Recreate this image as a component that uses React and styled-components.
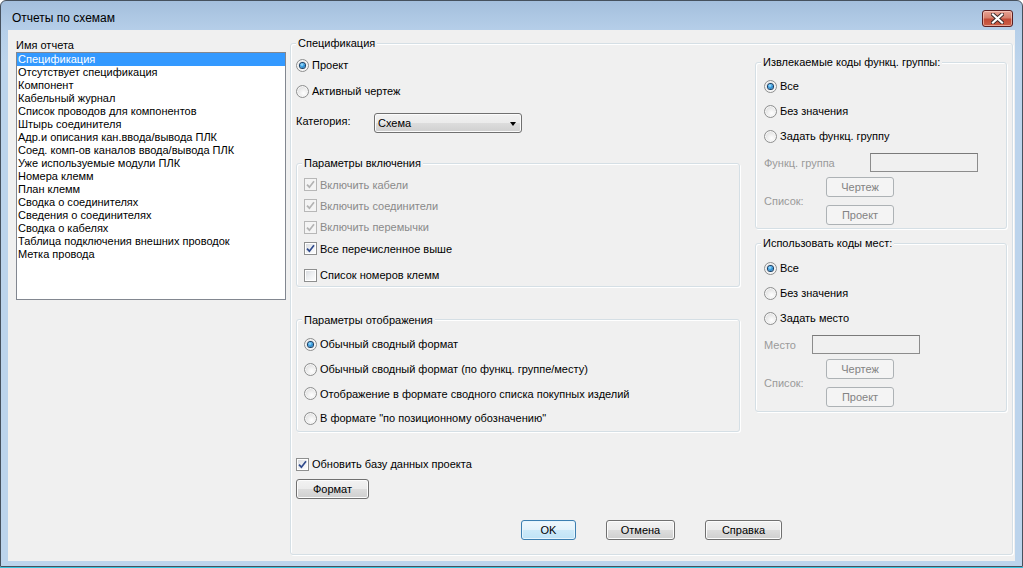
import React from 'react';
import styled, { createGlobalStyle, css } from 'styled-components';

const GlobalStyle = createGlobalStyle`
  html, body { margin: 0; padding: 0; }
  body {
    width: 1023px; height: 568px; overflow: hidden;
    background: linear-gradient(to top, #36c5e0 0, #36c5e0 1px, #ffffff 1px);
    font-family: "Liberation Sans", Arial, sans-serif;
    font-size: 11px; color: #000;
  }
  #root { width: 1023px; height: 568px; }
  * { box-sizing: border-box; }
`;

const Window = styled.div`
  width: 1023px; height: 567px;
  border: 1px solid #46515e;
  border-radius: 6px 6px 0 0;
  background: linear-gradient(#a4bfdd 0, #b6cfe9 30px, #bcd4ec 60px, #bcd4ec 100%);
  display: flex; flex-direction: column;
  padding: 0 7px 5px 7px;
  overflow: hidden;
`;

const TitleBar = styled.div`
  height: 29px; flex: none;
  margin: 0 -7px;
  display: flex; align-items: center;
  padding: 5px 9px 0 11px;
`;

const Title = styled.div`
  font-size: 12px; line-height: 14px; color: #000;
`;

const CloseButton = styled.div`
  margin-left: auto;
  width: 31px; height: 17px;
  border: 1px solid #5a1f22;
  border-radius: 3px;
  background: linear-gradient(#e8a395 0%, #d6806d 45%, #c24a36 55%, #cc6048 100%);
  box-shadow: inset 0 0 0 1px rgba(255, 220, 210, 0.55);
  display: flex; align-items: center; justify-content: center;
`;

const Client = styled.div`
  flex: 1; min-height: 0;
  display: flex; gap: 4px;
  background: #f0f0f0;
  padding: 6px 2px 6px 8px;
`;

const LeftPane = styled.div`
  width: 270px; flex: none;
  display: flex; flex-direction: column;
  padding-top: 2px;
`;

const ListLabel = styled.div`
  line-height: 14px; height: 14px;
`;

const ListBox = styled.div`
  height: 248px;
  border: 1px solid #828790;
  background: #fff;
  padding: 0;
`;

const ListItem = styled.div`
  height: 13px; line-height: 13px;
  padding-left: 1px;
  white-space: nowrap;
  ${p => p.$selected && css`background: #3399ff; color: #fff;`}
`;

const Group = styled.fieldset`
  margin: 0; padding: 0; min-width: 0;
  border: 1px solid #d5dfe5;
  border-radius: 3px;
  box-shadow: inset 1px 1px 0 #fff, 1px 1px 0 #fff;
  margin-top: ${p => p.$mt || 0}px;
`;

const MainGroup = styled(Group)`
  flex: 1;
`;

const Legend = styled.legend`
  margin-left: 5px;
  padding: 0 2px;
  line-height: 14px; height: 14px;
  background: #f0f0f0;
  white-space: nowrap;
`;

const GroupBody = styled.div`
  display: flex; flex-direction: column;
  padding: ${p => p.$pad};
  gap: ${p => p.$gap || 0}px;
`;

const Columns = styled.div`
  display: flex; gap: 15px;
  padding: 0 5px;
`;

const LeftCol = styled.div`
  width: 444px; flex: none;
  display: flex; flex-direction: column;
  padding-top: 5px;
`;

const RightCol = styled.div`
  width: 252px; flex: none;
  display: flex; flex-direction: column;
  padding-top: 5px;
`;

const OptionRow = styled.label`
  display: flex; align-items: center; gap: 3px;
  height: ${p => p.$h || 20}px;
  margin-top: ${p => p.$mt || 0}px;
  color: ${p => (p.$disabled ? '#8a8a8a' : '#000')};
  white-space: nowrap;
  flex: none;
`;

const RadioCircle = styled.span`
  width: 13px; height: 13px; flex: none;
  border-radius: 50%;
  border: 1px solid #8e8f8f;
  background: radial-gradient(circle at 60% 65%, #ffffff 0%, #eeeeee 40%, #d2d2d2 100%);
  box-shadow: inset 0 0 0 1px #f7f7f7;
  display: inline-flex; align-items: center; justify-content: center;
  ${p => p.$checked && css`
    &::after {
      content: '';
      width: 5px; height: 5px; border-radius: 50%;
      background: radial-gradient(circle at 40% 35%, #b7ecff 0%, #3ea3e6 40%, #0d5793 100%);
      box-shadow: 0 0 0 1px #173f66;
    }
  `}
`;

const CheckSquare = styled.span`
  width: 13px; height: 13px; flex: none;
  border: 1px solid ${p => (p.$disabled ? '#b7b7b7' : '#8e8f8f')};
  background: ${p => (p.$disabled
    ? '#f4f4f4'
    : 'linear-gradient(135deg, #d5d8dd 0%, #eef0f2 50%, #ffffff 100%)')};
  box-shadow: inset 0 0 0 1px ${p => (p.$disabled ? '#f4f4f4' : '#ffffff')};
  display: inline-flex; align-items: center; justify-content: center;
`;

const FieldRow = styled.div`
  display: flex; align-items: ${p => p.$align || 'center'};
  margin-top: ${p => p.$mt || 0}px;
  flex: none;
`;

const FieldLabel = styled.span`
  width: ${p => p.$w}px; flex: none;
  line-height: 14px;
  white-space: nowrap;
  color: ${p => (p.$disabled ? '#9a9a9a' : '#000')};
  ${p => p.$top && css`align-self: flex-start; padding-top: 1px;`}
`;

const Select = styled.div`
  width: 148px; height: 20px;
  border: 1px solid #707070;
  border-radius: 3px;
  background: linear-gradient(#f2f2f2 0%, #ebebeb 50%, #dddddd 50%, #cfcfcf 100%);
  box-shadow: inset 0 0 0 1px #fbfbfb;
  display: flex; align-items: center;
  padding: 0 5px 0 3px;
`;

const SelectValue = styled.span`
  flex: 1;
`;

const Arrow = styled.span`
  width: 0; height: 0;
  border-left: 3.5px solid transparent;
  border-right: 3.5px solid transparent;
  border-top: 4px solid #000;
  margin-top: 1px;
`;

const TextBox = styled.div`
  width: 108px; height: 19px;
  border: 1px solid #8c8c8c;
  border-top-color: #7a7a7a;
  background: #f0f0f0;
`;

const Button = styled.button`
  width: ${p => p.$w}px; height: 20px; padding: 0;
  font-family: inherit; font-size: 11px; color: #000;
  border: 1px solid #707070;
  border-radius: 3px;
  background: linear-gradient(#f2f2f2 0%, #ebebeb 50%, #dddddd 50%, #cfcfcf 100%);
  box-shadow: inset 0 0 0 1px #fcfcfc;
  flex: none;
  ${p => p.$default && css`
    border-color: #3c7fb1;
    background: linear-gradient(#f0f8fd 0%, #e2f2fb 50%, #cdeaf9 50%, #bfe3f6 100%);
    box-shadow: inset 0 0 0 1px #e6f5fd;
  `}
  &:disabled {
    color: #838383;
    border-color: #adb2b5;
    background: #f4f4f4;
    box-shadow: none;
  }
`;

const ButtonStack = styled.div`
  display: flex; flex-direction: column; gap: 8px;
`;

const ButtonRow = styled.div`
  display: flex; gap: 30px;
  padding-left: 225px;
  margin-top: ${p => p.$mt || 0}px;
`;

const CloseGlyph = () => (
  <svg width="13" height="11" viewBox="0 0 13 11">
    <path d="M2 1.5 L11 9.5 M11 1.5 L2 9.5" stroke="#3b2a2a" strokeWidth="4" strokeLinecap="square" />
    <path d="M2 1.5 L11 9.5 M11 1.5 L2 9.5" stroke="#ffffff" strokeWidth="2.2" strokeLinecap="square" />
  </svg>
);

const CheckMark = ({ disabled }) => (
  <svg width="9" height="9" viewBox="0 0 9 9">
    <path
      d="M1 4.6 L3.4 7.2 L8 1.2"
      fill="none"
      stroke={disabled ? '#b3b3b3' : '#2f4a8c'}
      strokeWidth="1.7"
    />
  </svg>
);

const Radio = ({ label, checked, mt, h }) => (
  <OptionRow $mt={mt} $h={h}>
    <RadioCircle $checked={checked} />
    <span>{label}</span>
  </OptionRow>
);

const Check = ({ label, checked, disabled, mt, h }) => (
  <OptionRow $mt={mt} $h={h} $disabled={disabled}>
    <CheckSquare $disabled={disabled}>{checked && <CheckMark disabled={disabled} />}</CheckSquare>
    <span>{label}</span>
  </OptionRow>
);

const reports = [
  'Спецификация',
  'Отсутствует спецификация',
  'Компонент',
  'Кабельный журнал',
  'Список проводов для компонентов',
  'Штырь соединителя',
  'Адр.и описания кан.ввода/вывода ПЛК',
  'Соед. комп-ов каналов ввода/вывода ПЛК',
  'Уже используемые модули ПЛК',
  'Номера клемм',
  'План клемм',
  'Сводка о соединителях',
  'Сведения о соединителях',
  'Сводка о кабелях',
  'Таблица подключения внешних проводок',
  'Метка провода',
];

const CodeGroup = ({ title, mt, pad, options, fieldLabel, labelWidth }) => (
  <Group $mt={mt}>
    <Legend>{title}</Legend>
    <GroupBody $pad={pad}>
      {options.map((o, i) => (
        <Radio key={o} label={o} checked={i === 0} mt={i === 0 ? 0 : 5} />
      ))}
      <FieldRow $mt={7}>
        <FieldLabel $w={labelWidth} $disabled>{fieldLabel}</FieldLabel>
        <TextBox />
      </FieldRow>
      <FieldRow $mt={5}>
        <FieldLabel $w={62} $disabled>Список:</FieldLabel>
        <ButtonStack>
          <Button $w={68} disabled>Чертеж</Button>
          <Button $w={68} disabled>Проект</Button>
        </ButtonStack>
      </FieldRow>
    </GroupBody>
  </Group>
);

export default function App() {
  return (
    <>
      <GlobalStyle />
      <Window>
        <TitleBar>
          <Title>Отчеты по схемам</Title>
          <CloseButton aria-label="Закрыть">
            <CloseGlyph />
          </CloseButton>
        </TitleBar>
        <Client>
          <LeftPane>
            <ListLabel>Имя отчета</ListLabel>
            <ListBox>
              {reports.map((r, i) => (
                <ListItem key={r} $selected={i === 0}>{r}</ListItem>
              ))}
            </ListBox>
          </LeftPane>
          <MainGroup>
            <Legend>Спецификация</Legend>
            <Columns>
              <LeftCol>
                <Radio label="Проект" checked />
                <Radio label="Активный чертеж" mt={6} />
                <FieldRow $mt={12}>
                  <FieldLabel $w={78} $top>Категория:</FieldLabel>
                  <Select>
                    <SelectValue>Схема</SelectValue>
                    <Arrow />
                  </Select>
                </FieldRow>
                <Group $mt={23}>
                  <Legend>Параметры включения</Legend>
                  <GroupBody $pad="4px 0 0 7px">
                    <Check label="Включить кабели" checked disabled h={21.33} />
                    <Check label="Включить соединители" checked disabled h={21.33} />
                    <Check label="Включить перемычки" checked disabled h={21.33} />
                    <Check label="Все перечисленное выше" checked h={21.33} />
                    <Check label="Список номеров клемм" h={21.33} mt={5.33} />
                  </GroupBody>
                </Group>
                <Group $mt={26}>
                  <Legend>Параметры отображения</Legend>
                  <GroupBody $pad="7.5px 0 3px 7px" $gap={4.67}>
                    <Radio label="Обычный сводный формат" checked />
                    <Radio label="Обычный сводный формат (по функц. группе/месту)" />
                    <Radio label="Отображение в формате сводного списка покупных изделий" />
                    <Radio label={'В формате "по позиционному обозначению"'} />
                  </GroupBody>
                </Group>
                <Check label="Обновить базу данных проекта" checked mt={22} />
                <FieldRow $mt={5}>
                  <Button $w={73}>Формат</Button>
                </FieldRow>
                <ButtonRow $mt={21}>
                  <Button $w={55} $default>OK</Button>
                  <Button $w={69}>Отмена</Button>
                  <Button $w={77}>Справка</Button>
                </ButtonRow>
              </LeftCol>
              <RightCol>
                <CodeGroup
                  title="Извлекаемые коды функц. группы:"
                  pad="7px 0 3px 8px"
                  options={['Все', 'Без значения', 'Задать функц. группу']}
                  fieldLabel="Функц. группа"
                  labelWidth={106}
                />
                <CodeGroup
                  title="Использовать коды мест:"
                  mt={7}
                  pad="8px 0 4px 8px"
                  options={['Все', 'Без значения', 'Задать место']}
                  fieldLabel="Место"
                  labelWidth={48}
                />
              </RightCol>
            </Columns>
          </MainGroup>
        </Client>
      </Window>
    </>
  );
}
